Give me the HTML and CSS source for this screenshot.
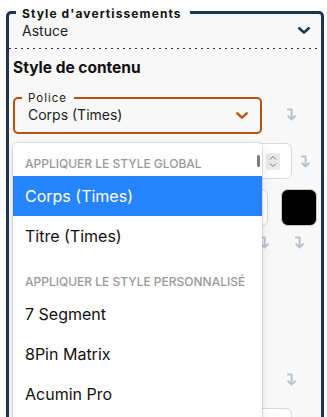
FILE: index.html
```html
<!DOCTYPE html>
<html lang="fr">
<head>
<meta charset="utf-8">
<title>Style</title>
<link rel="stylesheet" href="styles.css">
</head>
<body>
<fieldset class="panel">
  <legend class="panel-legend">Style d'avertissements</legend>
  <div class="panel-select">
    <span class="panel-value">Astuce</span>
    <svg class="chev" width="12" height="7" viewBox="0 0 12 7"><path d="M1.3 1.3 6 5.6 10.7 1.3" fill="none" stroke="#1c3451" stroke-width="2.6" stroke-linecap="round" stroke-linejoin="round"/></svg>
  </div>
  <div class="content">
    <h2 class="section-title">Style de contenu</h2>

    <div class="row row-police">
      <div class="select-wrap">
        <fieldset class="field">
          <legend class="field-legend">Police</legend>
          <div class="field-value">
            <span>Corps (Times)</span>
            <svg class="chev chev-field" width="12" height="7" viewBox="0 0 12 7"><path d="M1.3 1.3 6 5.6 10.7 1.3" fill="none" stroke="#b9500f" stroke-width="2.4" stroke-linecap="round" stroke-linejoin="round"/></svg>
          </div>
        </fieldset>
        <div class="menu">
          <div class="menu-group">
            <div class="menu-heading">Appliquer le style global</div>
            <div class="menu-option is-selected">Corps (Times)</div>
            <div class="menu-option">Titre (Times)</div>
          </div>
          <div class="menu-group">
            <div class="menu-heading">Appliquer le style personnalisé</div>
            <div class="menu-option">7 Segment</div>
            <div class="menu-option">8Pin Matrix</div>
            <div class="menu-option">Acumin Pro</div>
          </div>
          <div class="menu-thumb"></div>
        </div>
      </div>
      <div class="arrow-cell arrow-cell-police">
        <svg class="arrow" width="9" height="13" viewBox="0 0 9 13"><path d="M1 1.5H4.6V11.2M1.3 8.2 4.6 11.5 7.9 8.2" fill="none" stroke="#b7c3cf" stroke-width="2" stroke-linecap="round" stroke-linejoin="round"/></svg>
      </div>
    </div>

    <div class="row row-size">
      <div class="input input-size">
        <span class="spinner">
          <svg width="14" height="17" viewBox="0 0 14 17"><rect width="14" height="17" fill="#e9e9ee"/><path d="M4 6.5 7 3.5 10 6.5M4 10.5 7 13.5 10 10.5" fill="none" stroke="#777" stroke-width="1"/></svg>
        </span>
      </div>
      <div class="arrow-cell arrow-cell-size">
        <svg class="arrow" width="9" height="13" viewBox="0 0 9 13"><path d="M1 1.5H4.6V11.2M1.3 8.2 4.6 11.5 7.9 8.2" fill="none" stroke="#b7c3cf" stroke-width="2" stroke-linecap="round" stroke-linejoin="round"/></svg>
      </div>
    </div>

    <div class="row row-color">
      <div class="input input-color"></div>
      <div class="swatch"></div>
    </div>

    <div class="row row-arrows">
      <svg class="arrow" width="9" height="13" viewBox="0 0 9 13"><path d="M1 1.5H4.6V11.2M1.3 8.2 4.6 11.5 7.9 8.2" fill="none" stroke="#b7c3cf" stroke-width="2" stroke-linecap="round" stroke-linejoin="round"/></svg>
      <svg class="arrow" width="9" height="13" viewBox="0 0 9 13"><path d="M1 1.5H4.6V11.2M1.3 8.2 4.6 11.5 7.9 8.2" fill="none" stroke="#b7c3cf" stroke-width="2" stroke-linecap="round" stroke-linejoin="round"/></svg>
    </div>

    <div class="row row-reset">
      <svg class="arrow" width="9" height="13" viewBox="0 0 9 13"><path d="M1 1.5H4.6V11.2M1.3 8.2 4.6 11.5 7.9 8.2" fill="none" stroke="#b7c3cf" stroke-width="2" stroke-linecap="round" stroke-linejoin="round"/></svg>
    </div>

    <div class="row row-last">
      <div class="input input-last"></div>
    </div>
  </div>
</fieldset>
</body>
</html>
```

FILE: styles.css
```css
* { box-sizing: border-box; }

html, body {
  margin: 0;
  background: #ffffff;
}

body {
  width: 327px;
  height: 417px;
  overflow: hidden;
  padding: 3px 3px 0 6px;
  font-family: Inter, "Noto Sans", sans-serif;
  color: #1f1f1f;
}

.panel {
  margin: 0;
  padding: 0;
  min-width: 0;
  height: 460px;
  border: 3px solid #1c3451;
  border-radius: 5px 5px 0 0;
  background: #f8f8f8;
}

.panel-legend {
  margin-left: 7px;
  padding: 4px 8px 0 6px;
  font-size: 12px;
  font-weight: 700;
  line-height: 14px;
  letter-spacing: 1.1px;
  color: #111;
}

.panel-select {
  display: flex;
  justify-content: space-between;
  align-items: flex-start;
  height: 28px;
  padding: 0 11px 0 13px;
  background-image: linear-gradient(to right, #1c3451 2px, transparent 2px);
  background-size: 6px 1px;
  background-repeat: repeat-x;
  background-position: left bottom;
}

.panel-value {
  font-size: 14px;
  line-height: 20px;
  color: #222;
}

.chev {
  display: block;
  margin-top: 6px;
}

.content {
  padding: 0 4px;
}

.section-title {
  margin: 9px 0 0;
  font-size: 15.5px;
  font-weight: 700;
  line-height: 20px;
  color: #111;
}

.row {
  display: flex;
}

.row-police {
  margin-top: 13px;
  align-items: flex-start;
}

.select-wrap {
  position: relative;
  flex: none;
  width: 249px;
}

.field {
  margin: 0;
  padding: 0;
  min-width: 0;
  border: 2px solid #b9500f;
  border-radius: 5px;
}

.field-legend {
  margin-left: 7px;
  padding: 0 7px 0 6px;
  font-size: 11.5px;
  line-height: 14px;
  letter-spacing: 1px;
  color: #222;
}

.field-value {
  display: flex;
  justify-content: space-between;
  align-items: flex-start;
  height: 27px;
  padding: 0 12px 0 13px;
  font-size: 14px;
  line-height: 20px;
  color: #222;
}

.chev-field {
  margin-top: 7px;
}

.menu {
  position: absolute;
  top: calc(100% + 9px);
  left: 0;
  right: 0;
  z-index: 2;
  height: 300px;
  overflow: hidden;
  padding: 4px 0;
  background: #fff;
  border-radius: 4px;
  box-shadow: 0 0 0 1px rgba(0, 0, 0, 0.1), 0 4px 11px rgba(0, 0, 0, 0.1);
}

.menu-group {
  padding: 9px 0;
}

.menu-heading {
  margin-bottom: 4px;
  padding: 0 12px;
  font-size: 12px;
  font-weight: 500;
  line-height: 16px;
  white-space: nowrap;
  text-transform: uppercase;
  color: #999;
}

.menu-option {
  height: 40px;
  padding: 0 12px;
  font-size: 16px;
  line-height: 40px;
  white-space: nowrap;
  color: #111;
}

.menu-option.is-selected {
  background: #2684ff;
  color: #fff;
}

.menu-thumb {
  position: absolute;
  top: 12px;
  right: 2px;
  width: 3px;
  height: 12px;
  border-radius: 1.5px;
  background: #7d7d7d;
}

.arrow {
  display: block;
}

.arrow-cell-police {
  padding: 17px 0 0 25px;
}

.input {
  background: #fff;
  border: 1px solid #d9d9d9;
  border-radius: 6px;
}

.row-size {
  margin-top: 9px;
  align-items: center;
}

.input-size {
  display: flex;
  justify-content: flex-end;
  align-items: center;
  width: 279px;
  height: 36px;
  padding-right: 11px;
}

.spinner svg {
  display: block;
}

.arrow-cell-size {
  padding-left: 9px;
}

.row-color {
  margin-top: 10px;
}

.input-color {
  width: 255px;
  height: 37px;
}

.swatch {
  width: 36px;
  height: 37px;
  margin-left: 13px;
  background: #000;
  border: 1px solid #c8c8c8;
  border-radius: 7px;
}

.row-arrows {
  margin-top: 10px;
  padding-left: 247px;
  gap: 26px;
}

.row-reset {
  margin-top: 124px;
  padding-left: 274px;
}

.row-last {
  margin-top: 22px;
}

.input-last {
  width: 279px;
  height: 36px;
}
```
